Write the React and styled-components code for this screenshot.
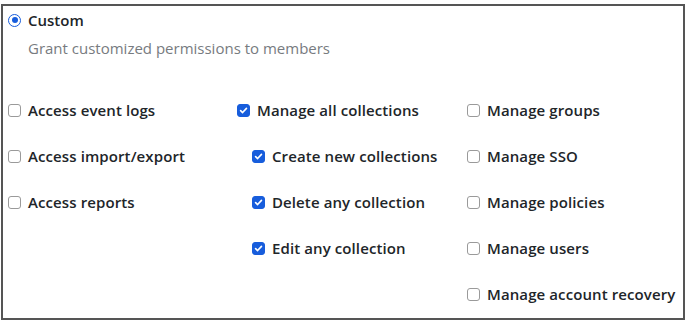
import React from 'react';
import styled, { createGlobalStyle } from 'styled-components';

const GlobalStyle = createGlobalStyle`
  body {
    margin: 0;
    background: #ffffff;
    font-family: "Open Sans", "Liberation Sans", sans-serif;
  }
`;

const Frame = styled.div`
  box-sizing: border-box;
  width: 684px;
  height: 316px;
  margin: 4px 0 0 1px;
  border: 2px solid #555555;
  padding: 4px 0 0 5px;
  color: #212529;
`;

const RadioRow = styled.label`
  display: flex;
  align-items: center;
  gap: 7px;
  height: 20px;
  font-size: 15px;
  font-weight: 600;
`;

const RadioDot = styled.span`
  box-sizing: border-box;
  width: 13px;
  height: 13px;
  border: 1.5px solid #175ddc;
  border-radius: 50%;
  display: flex;
  align-items: center;
  justify-content: center;

  &::after {
    content: '';
    width: 6px;
    height: 6px;
    border-radius: 50%;
    background: #175ddc;
  }
`;

const Hint = styled.div`
  margin: 8px 0 0 20px;
  height: 20px;
  line-height: 20px;
  font-size: 15px;
  color: #777b80;
`;

const Grid = styled.div`
  display: grid;
  grid-template-columns: 229px 230px 1fr;
  margin-top: 42px;
`;

const Column = styled.div`
  display: flex;
  flex-direction: column;
  gap: 26px;
`;

const Item = styled.label`
  display: flex;
  align-items: center;
  gap: 7px;
  height: 20px;
  padding-left: ${({ $indent }) => ($indent ? '15px' : '0')};
  font-size: 15px;
  font-weight: 600;
  letter-spacing: 0.1px;
  white-space: nowrap;
`;

const Box = styled.span`
  box-sizing: border-box;
  flex: none;
  width: 13px;
  height: 13px;
  border-radius: 3px;
  border: 1px solid ${({ $checked }) => ($checked ? '#175ddc' : '#9a9a9a')};
  background: ${({ $checked }) => ($checked ? '#175ddc' : '#ffffff')};
  display: flex;
  align-items: center;
  justify-content: center;
`;

const Check = () => (
  <svg width="9" height="9" viewBox="0 0 10 10">
    <path d="M1.8 5.2 L4 7.3 L8.3 2.6" fill="none" stroke="#ffffff" strokeWidth="1.8" strokeLinecap="round" strokeLinejoin="round" />
  </svg>
);

const columns = [
  [
    { label: 'Access event logs' },
    { label: 'Access import/export' },
    { label: 'Access reports' },
  ],
  [
    { label: 'Manage all collections', checked: true },
    { label: 'Create new collections', checked: true, indent: true },
    { label: 'Delete any collection', checked: true, indent: true },
    { label: 'Edit any collection', checked: true, indent: true },
  ],
  [
    { label: 'Manage groups' },
    { label: 'Manage SSO' },
    { label: 'Manage policies' },
    { label: 'Manage users' },
    { label: 'Manage account recovery' },
  ],
];

const App = () => (
  <>
    <GlobalStyle />
    <Frame>
      <RadioRow>
        <RadioDot />
        Custom
      </RadioRow>
      <Hint>Grant customized permissions to members</Hint>
      <Grid>
        {columns.map((col, i) => (
          <Column key={i}>
            {col.map((item) => (
              <Item key={item.label} $indent={item.indent}>
                <Box $checked={item.checked}>{item.checked ? <Check /> : null}</Box>
                {item.label}
              </Item>
            ))}
          </Column>
        ))}
      </Grid>
    </Frame>
  </>
);

export default App;
